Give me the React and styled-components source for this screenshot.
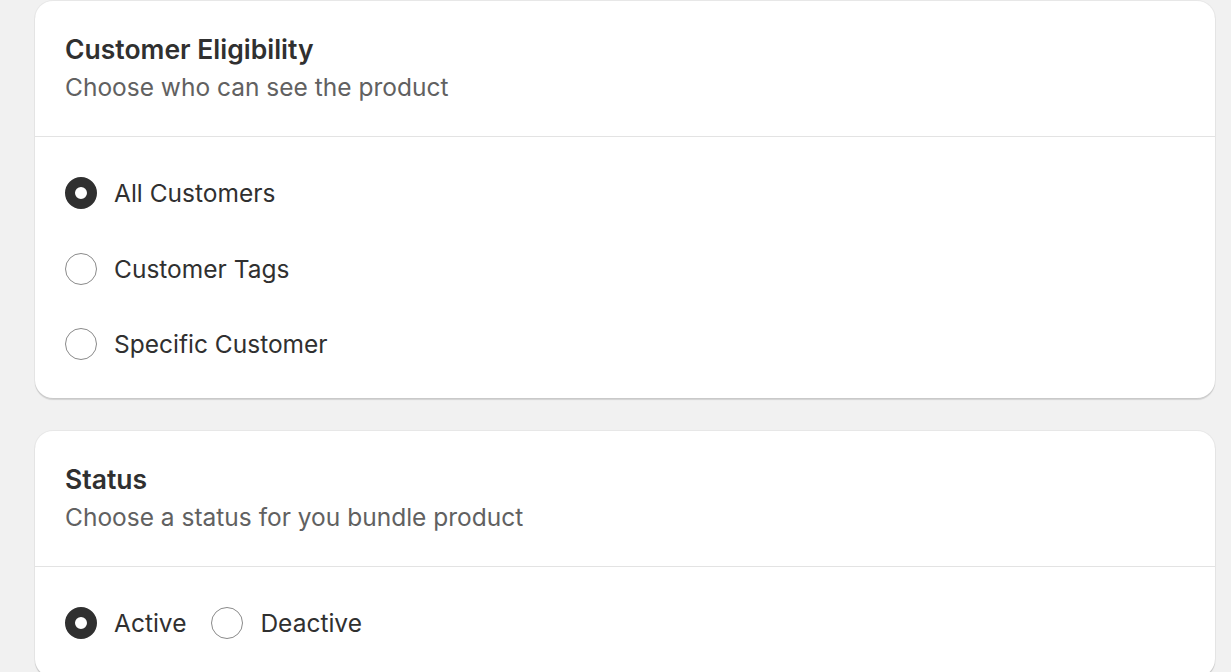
import styled, { createGlobalStyle } from 'styled-components';

const GlobalStyle = createGlobalStyle`
	body {
		margin: 0;
		background: #f1f1f1;
		font-family: Inter, "Noto Sans", sans-serif;
		color: #303030;
	}
`;

function App() {
	return (
		<>
			<GlobalStyle />
			<Page>
				<Card>
					<Header>
						<Title>Customer Eligibility</Title>
						<Subtitle>Choose who can see the product</Subtitle>
					</Header>
					<Body>
						<RadioList>
							<Radio checked label="All Customers" />
							<Radio label="Customer Tags" />
							<Radio label="Specific Customer" />
						</RadioList>
					</Body>
				</Card>
				<Card>
					<Header>
						<Title>Status</Title>
						<Subtitle>Choose a status for you bundle product</Subtitle>
					</Header>
					<Body>
						<RadioRow>
							<Radio checked label="Active" />
							<Radio label="Deactive" />
						</RadioRow>
					</Body>
				</Card>
			</Page>
		</>
	);
}

function Radio({ checked, label }) {
	return (
		<Option>
			<Circle $checked={checked} />
			<Label>{label}</Label>
		</Option>
	);
}

const Page = styled.div`
	display: flex;
	flex-direction: column;
	gap: 33px;
	padding: 1px 16px 0 35px;
`;

const Card = styled.div`
	background: #fff;
	border-radius: 18px;
	box-shadow: 0 1.5px 1px rgba(0, 0, 0, 0.13), 0 0 0 1px rgba(0, 0, 0, 0.04);
	overflow: hidden;
`;

const Header = styled.div`
	display: flex;
	flex-direction: column;
	gap: 6px;
	padding: 32px 30px 33px;
	border-bottom: 1px solid #e3e3e3;
`;

const Title = styled.div`
	font-size: 26.5px;
	line-height: 32px;
	font-weight: 600;
	color: #303030;
`;

const Subtitle = styled.div`
	font-size: 24.5px;
	line-height: 32px;
	color: #616161;
`;

const Body = styled.div`
	padding: 40px 30px 38px;
`;

const RadioList = styled.div`
	display: flex;
	flex-direction: column;
	gap: 43.5px;
`;

const RadioRow = styled.div`
	display: flex;
	gap: 25px;
`;

const Option = styled.label`
	display: flex;
	align-items: center;
	gap: 17px;
	cursor: pointer;
`;

const Circle = styled.span`
	box-sizing: border-box;
	width: 32px;
	height: 32px;
	border-radius: 50%;
	flex-shrink: 0;
	border: ${(p) => (p.$checked ? '10.5px solid #303030' : '1.5px solid #8a8a8a')};
	background: #fff;
`;

const Label = styled.span`
	font-size: 24.5px;
	line-height: 32px;
	color: #303030;
`;

export default App;
